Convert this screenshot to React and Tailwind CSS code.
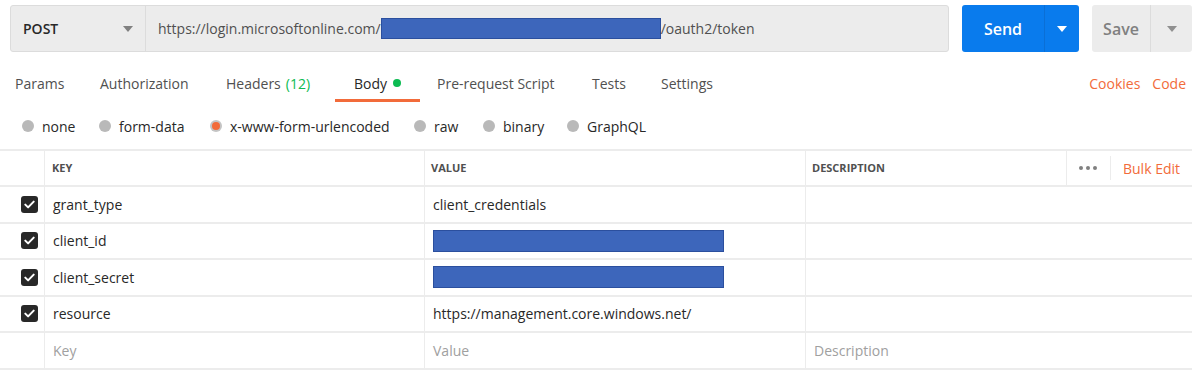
import { useState } from "react";

const TABS = [
  { label: "Params", x: "w-[85px]" },
  { label: "Authorization", x: "w-[126px]" },
  { label: "Headers", extra: "(12)", x: "w-[109px]" },
];

const ROWS = [
  { key: "grant_type", value: "client_credentials" },
  { key: "client_id", redacted: true },
  { key: "client_secret", redacted: true },
  { key: "resource", value: "https://management.core.windows.net/" },
];

// each radio's box width is the distance to the next one
const BODY_TYPES = [
  { label: "none", w: "w-[77px]" },
  { label: "form-data", w: "w-[111px]" },
  { label: "x-www-form-urlencoded", w: "w-[204px]", active: true },
  { label: "raw", w: "w-[69px]" },
  { label: "binary", w: "w-[84px]" },
  { label: "GraphQL", w: "" },
];

function Caret({ className = "" }) {
  return (
    <svg width="10" height="6" viewBox="0 0 10 6" className={className}>
      <path d="M0 0h10L5 6z" fill="currentColor" />
    </svg>
  );
}

function Check() {
  return (
    <span className="w-[17px] h-[17px] rounded-[3px] bg-[#282828] flex items-center justify-center">
      <svg width="11" height="9" viewBox="0 0 11 9">
        <path d="M1.3 4.6l2.8 2.8L9.7 1.6" stroke="#fff" strokeWidth="2" fill="none" strokeLinecap="round" strokeLinejoin="round" />
      </svg>
    </span>
  );
}

function Radio({ label, active, w }) {
  return (
    <div className={`flex items-center gap-[8px] ${w}`}>
      <span
        className={`w-[12px] h-[12px] rounded-full flex items-center justify-center ${
          active ? "bg-[#c4c4c4]" : "bg-[#b9b9b9]"
        }`}
      >
        {active && <span className="w-[8px] h-[8px] rounded-full bg-[#f26b3a]" />}
      </span>
      <span className="text-[14px] text-[#282828]">{label}</span>
    </div>
  );
}

function Redacted() {
  return <div className="w-[291px] h-[22px] bg-[#3d66bb] border border-[#2b4f9e]" />;
}

export default function App() {
  const [method] = useState("POST");

  return (
    <div className="w-[1192px] h-[377px] bg-white overflow-hidden font-['Open_Sans',sans-serif] text-[#282828]">
      {/* request bar */}
      <div className="flex items-center h-[56px] pl-[10px] pt-[1px]">
        <div className="flex h-[47px] w-[939px] rounded-[3px] border border-[#dcdcdc] bg-[#ececec]">
          <div className="w-[135px] flex items-center justify-between pl-[12px] pr-[12px] border-r border-[#dcdcdc]">
            <span className="text-[14px] font-semibold text-[#282828]">{method}</span>
            <Caret className="text-[#808080]" />
          </div>
          <div className="flex items-center pl-[12px] text-[14px] text-[#505050]">
            <span>https://login.microsoftonline.com/</span>
            <span className="w-[280px] h-[21px] bg-[#3d66bb] border border-[#2b4f9e]" />
            <span>/oauth2/token</span>
          </div>
        </div>
        <div className="ml-[13px] flex h-[47px] w-[117px] rounded-[3px] bg-[#097bed] text-white">
          <div className="w-[82px] flex items-center justify-center text-[16px] font-semibold">Send</div>
          <div className="flex-1 flex items-center justify-center border-l border-[#0a6fd6]">
            <Caret />
          </div>
        </div>
        <div className="ml-[13px] flex h-[47px] w-[100px] rounded-[3px] bg-[#ececec] text-[#808080]">
          <div className="w-[58px] flex items-center justify-center text-[16px] font-semibold">Save</div>
          <div className="flex-1 flex items-center justify-center border-l border-[#dcdcdc]">
            <Caret className="text-[#909090]" />
          </div>
        </div>
      </div>

      {/* tabs */}
      <div className="flex items-stretch h-[46px] pl-[15px] pt-[8px] text-[14px] text-[#505050]">
        {TABS.map((t) => (
          <div key={t.label} className={`${t.x} flex items-center`}>
            {t.label}
            {t.extra && <span className="ml-[5px] text-[#0cbb52]">{t.extra}</span>}
          </div>
        ))}
        <div className="w-[85px] flex items-center justify-center relative text-[#282828]">
          Body
          <span className="ml-[6px] w-[8px] h-[8px] rounded-full bg-[#0cbb52]" />
          <span className="absolute left-0 right-0 bottom-0 h-[3px] bg-[#f26b3a]" />
        </div>
        <div className="w-[155px] ml-[17px] flex items-center">Pre-request Script</div>
        <div className="w-[69px] flex items-center">Tests</div>
        <div className="flex items-center">Settings</div>
        <div className="ml-auto flex items-center gap-[12px] text-[#f26b3a] pr-[6px]">
          <span>Cookies</span>
          <span>Code</span>
        </div>
      </div>

      {/* body type */}
      <div className="flex items-center h-[47px] pl-[22px] pt-[1px]">
        {BODY_TYPES.map((b) => (
          <Radio key={b.label} label={b.label} active={b.active} w={b.w} />
        ))}
      </div>

      {/* table */}
      <div className="border-t-2 border-[#ececec]">
        <div className="grid grid-cols-[45px_380px_381px_1fr] h-[36px] border-b-2 border-[#ececec] text-[11px] font-bold text-[#505050]">
          <div className="border-r border-[#ececec]" />
          <div className="flex items-center pl-[7px] border-r border-[#ececec]">KEY</div>
          <div className="flex items-center pl-[6px] border-r border-[#ececec]">VALUE</div>
          <div className="flex items-center pl-[6px]">
            <span>DESCRIPTION</span>
            <div className="ml-auto flex items-center h-full">
              <div className="h-full border-l border-[#ececec] w-[44px] flex items-center justify-center gap-[3px]">
                <span className="w-[4px] h-[4px] rounded-full bg-[#808080]" />
                <span className="w-[4px] h-[4px] rounded-full bg-[#808080]" />
                <span className="w-[4px] h-[4px] rounded-full bg-[#808080]" />
              </div>
              <div className="h-[24px] border-l border-[#ececec] pl-[12px] pr-[12px] flex items-center text-[14px] font-normal text-[#f26b3a]">
                Bulk Edit
              </div>
            </div>
          </div>
        </div>
        {ROWS.map((r) => (
          <div key={r.key} className="grid grid-cols-[45px_380px_381px_1fr] h-[36.5px] border-b-2 border-[#ececec] text-[14px]">
            <div className="flex items-center justify-end pr-[6px] border-r border-[#ececec]">
              <Check />
            </div>
            <div className="flex items-center pl-[8px] border-r border-[#ececec]">{r.key}</div>
            <div className="flex items-center pl-[8px] border-r border-[#ececec]">
              {r.redacted ? <Redacted /> : r.value}
            </div>
            <div />
          </div>
        ))}
        <div className="grid grid-cols-[45px_380px_381px_1fr] h-[36.5px] border-b-2 border-[#ececec] text-[14px] text-[#a0a0a0]">
          <div className="border-r border-[#ececec]" />
          <div className="flex items-center pl-[8px] border-r border-[#ececec]">Key</div>
          <div className="flex items-center pl-[8px] border-r border-[#ececec]">Value</div>
          <div className="flex items-center pl-[8px]">Description</div>
        </div>
      </div>
    </div>
  );
}
